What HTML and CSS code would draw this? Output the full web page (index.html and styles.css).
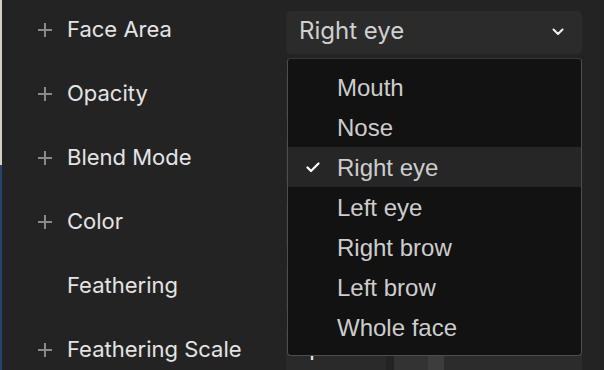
FILE: index.html
```html
<!DOCTYPE html>
<html>
<head>
<meta charset="utf-8">
<link rel="stylesheet" href="styles.css">
</head>
<body>
<div class="app">
  <div class="edge"><div class="edge-top"></div><div class="edge-bottom"></div></div>
  <div class="panel">
    <div class="row">
      <span class="icon"><svg width="16" height="16" viewBox="0 0 16 16"><path d="M8 1v14M1 8h14" stroke="#8a8a8a" stroke-width="2" fill="none"/></svg></span>
      <span class="label">Face Area</span>
      <div class="control select-wrap">
        <div class="select">
          <span class="select-text">Right eye</span>
          <svg class="chev" width="12" height="8" viewBox="0 0 12 8"><polyline points="1.5,1.5 6,6 10.5,1.5" stroke="#f2f2f2" stroke-width="2" fill="none" stroke-linecap="round" stroke-linejoin="round"/></svg>
        </div>
        <ul class="menu">
          <li class="item">Mouth</li>
          <li class="item">Nose</li>
          <li class="item active"><svg class="check" width="14" height="11" viewBox="0 0 14 11"><polyline points="1.5,5.5 5,9 12.5,1.5" stroke="#ffffff" stroke-width="2.2" fill="none" stroke-linecap="round" stroke-linejoin="round"/></svg>Right eye</li>
          <li class="item">Left eye</li>
          <li class="item">Right brow</li>
          <li class="item">Left brow</li>
          <li class="item">Whole face</li>
        </ul>
      </div>
    </div>
    <div class="row">
      <span class="icon"><svg width="16" height="16" viewBox="0 0 16 16"><path d="M8 1v14M1 8h14" stroke="#8a8a8a" stroke-width="2" fill="none"/></svg></span>
      <span class="label">Opacity</span>
      <div class="control box"></div>
    </div>
    <div class="row">
      <span class="icon"><svg width="16" height="16" viewBox="0 0 16 16"><path d="M8 1v14M1 8h14" stroke="#8a8a8a" stroke-width="2" fill="none"/></svg></span>
      <span class="label">Blend Mode</span>
      <div class="control box"></div>
    </div>
    <div class="row">
      <span class="icon"><svg width="16" height="16" viewBox="0 0 16 16"><path d="M8 1v14M1 8h14" stroke="#8a8a8a" stroke-width="2" fill="none"/></svg></span>
      <span class="label">Color</span>
      <div class="control box"></div>
    </div>
    <div class="row">
      <span class="icon"></span>
      <span class="label">Feathering</span>
      <div class="control box"></div>
    </div>
    <div class="row">
      <span class="icon"><svg width="16" height="16" viewBox="0 0 16 16"><path d="M8 1v14M1 8h14" stroke="#8a8a8a" stroke-width="2" fill="none"/></svg></span>
      <span class="label">Feathering Scale</span>
      <div class="control split">
        <div class="num">1</div>
        <div class="slider"><div class="fill"></div><div class="thumb"></div><div class="rest"></div></div>
      </div>
    </div>
  </div>
</div>
</body>
</html>
```

FILE: styles.css
```css
* { box-sizing: border-box; }
html, body { margin: 0; padding: 0; }
body {
  background: #232323;
  width: 604px;
  height: 370px;
  overflow: hidden;
  font-family: Inter, "Noto Sans", sans-serif;
}
.app {
  display: flex;
  height: 370px;
}
.edge {
  width: 2px;
  display: flex;
  flex-direction: column;
}
.edge-top { height: 165px; background: #d6d0c4; }
.edge-bottom { flex: 1; background: #26436e; }
.panel {
  flex: 1;
  display: flex;
  flex-direction: column;
}
.row {
  height: 64px;
  flex: none;
  display: flex;
  align-items: center;
}
.icon {
  width: 16px;
  height: 16px;
  margin-left: 35px;
  margin-right: 14px;
  margin-bottom: 4px;
  display: flex;
}
.label {
  width: 219px;
  color: #e4e4e4;
  font-size: 22px;
  padding-bottom: 6px;
  white-space: nowrap;
}
.control {
  width: 296px;
  height: 43px;
}
.select-wrap { position: relative; }
.select {
  height: 43px;
  background: #2b2b2b;
  border-radius: 5px;
  display: flex;
  align-items: center;
  justify-content: space-between;
  padding: 0 18px 4px 13px;
}
.select-text {
  color: #d0d0d0;
  font-size: 24px;
}
.chev { margin-top: 3px; }
.box {
  background: #2a2a2a;
  border-radius: 4px;
}
.menu {
  position: absolute;
  top: 47px;
  left: 1px;
  width: 295px;
  height: 298px;
  margin: 0;
  padding: 8px 0;
  list-style: none;
  background: #121212;
  border: 1px solid #4e4e4e;
  border-top-color: #383838;
  border-radius: 4px;
  z-index: 2;
  font-family: "Liberation Sans", Arial, sans-serif;
}
.item {
  height: 40px;
  display: flex;
  align-items: center;
  padding-left: 49px;
  padding-top: 3px;
  color: #cdcdcd;
  font-size: 24px;
  position: relative;
}
.item.active { background: #262626; }
.check {
  position: absolute;
  left: 18px;
  top: 15px;
}
.split {
  display: flex;
  gap: 8px;
}
.num {
  width: 100px;
  height: 43px;
  background: #2a2a2a;
  color: #f0f0f0;
  font-size: 22px;
  padding: 8px 0 0 20px;
}
.slider {
  flex: 1;
  display: flex;
  height: 43px;
}
.fill { width: 34px; background: #333333; }
.thumb { width: 16px; background: #3d3d3d; }
.rest { flex: 1; background: #2c2c2c; }
```
